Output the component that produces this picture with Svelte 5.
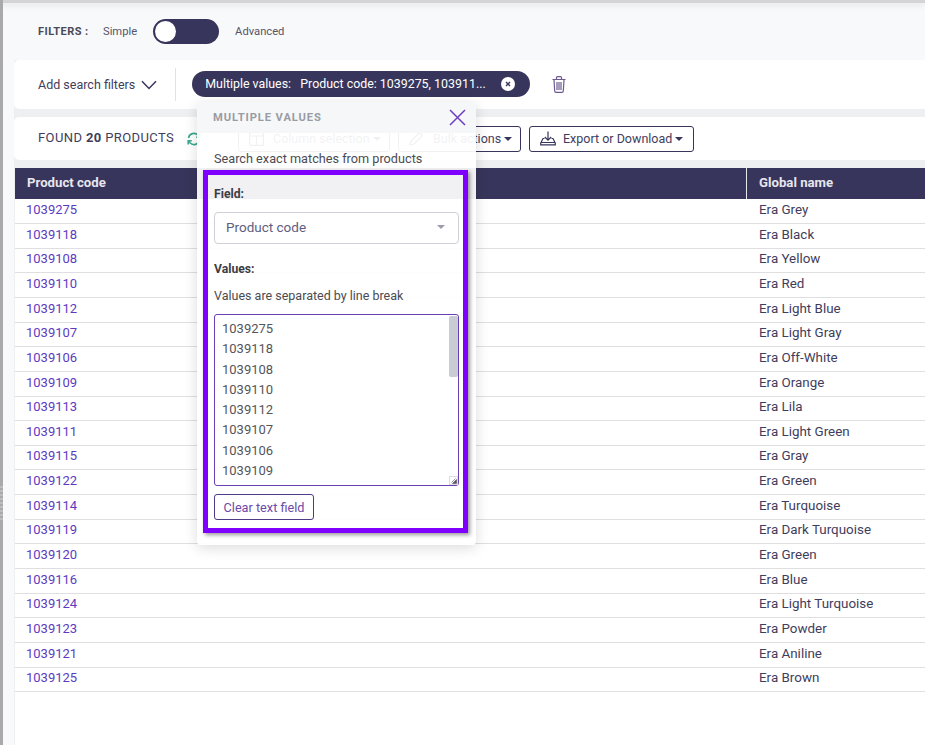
<script>
  const rows = [
    ['1039275', 'Era Grey'],
    ['1039118', 'Era Black'],
    ['1039108', 'Era Yellow'],
    ['1039110', 'Era Red'],
    ['1039112', 'Era Light Blue'],
    ['1039107', 'Era Light Gray'],
    ['1039106', 'Era Off-White'],
    ['1039109', 'Era Orange'],
    ['1039113', 'Era Lila'],
    ['1039111', 'Era Light Green'],
    ['1039115', 'Era Gray'],
    ['1039122', 'Era Green'],
    ['1039114', 'Era Turquoise'],
    ['1039119', 'Era Dark Turquoise'],
    ['1039120', 'Era Green'],
    ['1039116', 'Era Blue'],
    ['1039124', 'Era Light Turquoise'],
    ['1039123', 'Era Powder'],
    ['1039121', 'Era Aniline'],
    ['1039125', 'Era Brown']
  ];
  const values = rows.map((r) => r[0]).join('\n');
</script>

<div class="page">
  <div class="topline"></div>
  <div class="strip"><div class="grip"></div></div>

  <div class="mode-row">
    <span class="mode-title">FILTERS :</span>
    <span class="mode-label">Simple</span>
    <span class="toggle"><span class="knob"></span></span>
    <span class="mode-label">Advanced</span>
  </div>

  <div class="content">
    <div class="search-card">
      <span class="add-filter">Add search filters</span>
      <svg class="chevron" width="16" height="10" viewBox="0 0 16 10"><path d="M1 1.2 8 8.4 15 1.2" fill="none" stroke="#38355c" stroke-width="1.5"/></svg>
      <span class="divider"></span>
      <span class="chip">
        <span class="chip-name">Multiple values:</span>
        <span class="chip-value">Product code: 1039275, 103911...</span>
        <span class="chip-x">
          <svg width="6" height="6" viewBox="0 0 6 6"><path d="M1 1 5 5M5 1 1 5" stroke="#38355c" stroke-width="1.4"/></svg>
        </span>
      </span>
      <svg class="trash" width="14" height="17" viewBox="0 0 14 17" fill="none" stroke="#6d5a92" stroke-width="1.2"><path d="M.5 3.5h13M4.5 3.3V1.6q0-1 1-1h3q1 0 1 1v1.7M2 3.7l.7 11.3q.1 1.3 1.3 1.3h6q1.2 0 1.3-1.3L12 3.7M5 6v8M7 6v8M9 6v8"/></svg>
    </div>

    <div class="result-card">
      <span class="found">FOUND <b>20</b> PRODUCTS</span>
      <svg class="refresh" width="14" height="14" viewBox="0 0 14 14" fill="none" stroke="#3aa88f" stroke-width="1.6"><path d="M1.5 6A5.5 5.5 0 0 1 11 3.2L12.5 5M12.5 8A5.5 5.5 0 0 1 3 10.8L1.5 9"/><path d="M12.8 1.5V5.2H9.2M1.2 12.5V8.8H4.8"/></svg>
      <span class="btn column-btn">
        <svg width="15" height="14" viewBox="0 0 15 14" fill="none" stroke="#38355c" stroke-width="1.2"><rect x=".6" y=".6" width="13.8" height="12.8" rx="1"/><path d="M.6 4h13.8M7.5 4v9.4"/></svg>
        Column selection <i class="caret"></i>
      </span>
      <span class="btn bulk-btn">
        <svg width="15" height="15" viewBox="0 0 15 15" fill="none" stroke="#38355c" stroke-width="1.2"><path d="M1 14l1-4 8.5-8.5 3 3L5 13z"/></svg>
        Bulk actions <i class="caret"></i>
      </span>
      <span class="btn export-btn">
        <svg width="16" height="15" viewBox="0 0 16 15" fill="none" stroke="#38355c" stroke-width="1.2"><path d="M8 .5v8.5M4.8 6 8 9.2 11.2 6M4.5 7.5H3L.7 12.2v1.6h14.6v-1.6L13 7.5h-1.5M.7 11.5h14.6"/></svg>
        Export or Download <i class="caret"></i>
      </span>
    </div>

    <div class="table">
      <div class="head">
        <div class="cell first">Product code</div>
        <div class="cell second">Global name</div>
      </div>
      {#each rows as row}
        <div class="row">
          <div class="cell first"><span class="code">{row[0]}</span></div>
          <div class="cell second">{row[1]}</div>
        </div>
      {/each}
    </div>
  </div>

  <div class="popover">
    <div class="pop-head">
      <span>MULTIPLE VALUES</span>
      <svg width="17" height="17" viewBox="0 0 17 17"><path d="M1 1 16 16M16 1 1 16" stroke="#6c3fc0" stroke-width="1.5"/></svg>
    </div>
    <p class="pop-desc">Search exact matches from products</p>
    <div class="highlight">
      <div class="label field-label">Field:</div>
      <div class="select">
        <span>Product code</span>
        <i class="select-caret"></i>
      </div>
      <div class="label values-label">Values:</div>
      <div class="hint">Values are separated by line break</div>
      <div class="values-box">
        <textarea class="values" readonly value={values}></textarea>
        <span class="thumb"></span>
        <span class="resizer">
          <svg width="6" height="6" viewBox="0 0 6 6"><path d="M5.5 1.5v4h-4zM.5 4.5l4-4" fill="#55555c" stroke="#55555c" stroke-width=".6"/></svg>
        </span>
      </div>
      <span class="clear">Clear text field</span>
    </div>
  </div>
</div>

<style>
  :global(body) {
    margin: 0;
    background: #f8f9fb;
  }

  .page {
    position: relative;
    height: 745px;
    overflow: hidden;
    padding-left: 14px;
    box-sizing: border-box;
    background: #f8f9fb;
    font-family: Roboto, "Liberation Sans", sans-serif;
    font-size: 13px;
    color: #3f3d5c;
  }

  .topline {
    position: absolute;
    top: 0;
    left: 0;
    right: 0;
    height: 3px;
    background: #d4d4d6;
    box-shadow: 0 2px 6px rgba(0, 0, 0, 0.12);
  }

  .strip {
    position: absolute;
    left: 0;
    top: 0;
    bottom: 0;
    width: 3px;
    background: #a9a9ab;
  }

  .grip {
    margin-top: 486px;
    height: 34px;
    background: repeating-linear-gradient(to bottom, #bdbdbf 0 2px, #a9a9ab 2px 4px);
  }

  .mode-row {
    height: 60px;
    display: flex;
    align-items: center;
    padding: 2px 0 0 24px;
    box-sizing: border-box;
  }

  .mode-title {
    font-size: 11px;
    font-weight: 700;
    letter-spacing: 0.04em;
    color: #4a4a58;
    width: 65px;
  }

  .mode-label {
    color: #55556a;
    font-size: 11.2px;
  }

  .toggle {
    width: 66px;
    height: 25px;
    border-radius: 13px;
    background: #38355c;
    margin: 0 16px;
    padding: 2px;
    box-sizing: border-box;
  }

  .knob {
    display: block;
    width: 21px;
    height: 21px;
    border-radius: 50%;
    background: #fff;
  }

  .content {
    background: #eeeff1;
    min-height: 685px;
  }

  .search-card {
    height: 49px;
    margin-bottom: 8px;
    background: #fff;
    border-radius: 5px 0 0 5px;
    display: flex;
    align-items: center;
    padding-left: 24px;
  }

  .add-filter {
    font-size: 12.5px;
  }

  .chevron {
    margin-left: 6px;
  }

  .divider {
    width: 1px;
    height: 33px;
    background: #e2e2e4;
    margin: 0 16px 0 18px;
  }

  .chip {
    width: 338px;
    height: 26px;
    box-sizing: border-box;
    margin-top: -2px;
    padding: 0 15px 0 13px;
    border-radius: 13px;
    background: #38355c;
    color: #fff;
    display: flex;
    align-items: center;
    font-size: 12.4px;
  }

  .chip-name {
    width: 95px;
  }

  .chip-x {
    width: 14px;
    height: 14px;
    margin-left: auto;
    border-radius: 50%;
    background: #fff;
    display: flex;
    align-items: center;
    justify-content: center;
  }

  .trash {
    margin: -1px 0 0 22px;
  }

  .result-card {
    height: 43px;
    margin-bottom: 8px;
    background: #fff;
    border-radius: 5px 0 0 5px;
    display: flex;
    align-items: center;
    padding-left: 24px;
  }

  .found {
    width: 149px;
    padding-bottom: 2px;
    font-size: 13px;
    letter-spacing: 0.03em;
  }

  .refresh {
    margin-right: 37px;
  }

  .btn {
    height: 26px;
    box-sizing: border-box;
    margin-right: 8px;
    border: 1px solid #38355c;
    border-radius: 3px;
    display: flex;
    align-items: center;
    padding-left: 10px;
    white-space: nowrap;
    gap: 9px;
    font-size: 12.5px;
  }

  .column-btn {
    width: 152px;
  }

  .bulk-btn {
    width: 123px;
  }

  .export-btn {
    width: 165px;
    gap: 7px;
  }

  .caret {
    width: 0;
    height: 0;
    margin-left: -6px;
    border-left: 4px solid transparent;
    border-right: 4px solid transparent;
    border-top: 4px solid #38355c;
  }

  .export-btn .caret {
    margin-left: -4px;
  }

  .table {
    margin-left: 1px;
    background: #fff;
    min-height: 577px;
  }

  .head,
  .row {
    display: flex;
  }

  .head {
    height: 31.4px;
    background: #38355c;
    color: #e6e6ec;
    font-weight: 700;
    font-size: 13.2px;
    align-items: center;
  }

  .row {
    height: 24.65px;
    box-sizing: border-box;
    border-bottom: 1px solid #dfdfe1;
    align-items: center;
    padding-bottom: 3.4px;
  }

  .row:first-of-type {
    height: 24.85px;
  }

  .cell.first {
    width: 731px;
    padding-left: 11px;
    box-sizing: border-box;
  }

  .head .first {
    padding-left: 12px;
  }

  .head .cell {
    height: 100%;
    display: flex;
    align-items: center;
    padding-bottom: 2px;
    box-sizing: border-box;
  }

  .cell.second {
    padding-left: 13px;
    white-space: nowrap;
    flex: 1;
    font-size: 13.4px;
  }

  .head .second {
    border-left: 1px solid #e8e8ec;
    padding-left: 12px;
    font-size: 13.2px;
  }

  .code {
    color: #5d3bbf;
    font-size: 13px;
  }

  .popover {
    position: absolute;
    left: 197px;
    top: 102px;
    width: 279px;
    height: 443px;
    box-sizing: border-box;
    background: rgba(255, 255, 255, 0.93);
    border-radius: 4px;
    box-shadow: 0 3px 14px rgba(0, 0, 0, 0.14);
    color: #4b4b52;
  }

  .pop-head {
    height: 31px;
    padding: 0 10px 0 16px;
    display: flex;
    align-items: center;
    justify-content: space-between;
    background: #f6f7f9;
    border-radius: 4px 4px 0 0;
    font-size: 11.2px;
    font-weight: 700;
    letter-spacing: 0.08em;
    color: #9a9ca3;
  }

  .pop-desc {
    margin: 18px 0 0 17px;
    line-height: 16px;
    font-size: 12.7px;
  }

  .highlight {
    box-sizing: border-box;
    width: 265px;
    height: 363px;
    margin: 3px 0 0 6px;
    padding: 11px 4px 0 6px;
    border: 5px solid #7f00ff;
    box-shadow: 2px 2px 4px rgba(0, 0, 0, 0.4);
  }

  .label {
    font-weight: 700;
    font-size: 12.2px;
    line-height: 16px;
    color: #3d3d44;
  }

  .select {
    height: 32px;
    margin-top: 10px;
    box-sizing: border-box;
    background: #fff;
    border: 1px solid #cfd0d6;
    border-radius: 4px;
    display: flex;
    align-items: center;
    justify-content: space-between;
    padding: 0 13px 3px 11px;
    color: #5f5d7e;
    font-size: 13.5px;
  }

  .select-caret {
    width: 0;
    height: 0;
    border-left: 4px solid transparent;
    border-right: 4px solid transparent;
    border-top: 4px solid #9d9cae;
  }

  .values-label {
    margin-top: 17px;
  }

  .hint {
    margin-top: 11px;
    line-height: 16px;
    font-size: 12.5px;
  }

  .values-box {
    position: relative;
    margin-top: 10px;
    height: 172px;
  }

  .values {
    display: block;
    width: 245px;
    height: 172px;
    margin: 0;
    padding: 4px 0 0 7px;
    box-sizing: border-box;
    background: #fff;
    border: 1px solid #6a3fb5;
    border-radius: 3px;
    outline: none;
    font-family: inherit;
    font-size: 13px;
    line-height: 20.3px;
    color: #55555c;
    resize: none;
    overflow: hidden;
  }

  .thumb {
    position: absolute;
    top: 2px;
    right: 1px;
    width: 9px;
    height: 61px;
    border-radius: 2px;
    background: #c9ccd4;
  }

  .resizer {
    position: absolute;
    right: 1px;
    bottom: 1px;
    width: 9px;
    height: 9px;
    box-sizing: border-box;
    background: #fff;
    border: 1px solid #dcdde2;
    display: flex;
    align-items: center;
    justify-content: center;
  }

  .clear {
    display: flex;
    align-items: center;
    justify-content: center;
    width: 100px;
    height: 26px;
    margin-top: 8px;
    box-sizing: border-box;
    border: 1px solid #4f3a85;
    border-radius: 3px;
    color: #6c4aa8;
    font-size: 12.7px;
  }
</style>
